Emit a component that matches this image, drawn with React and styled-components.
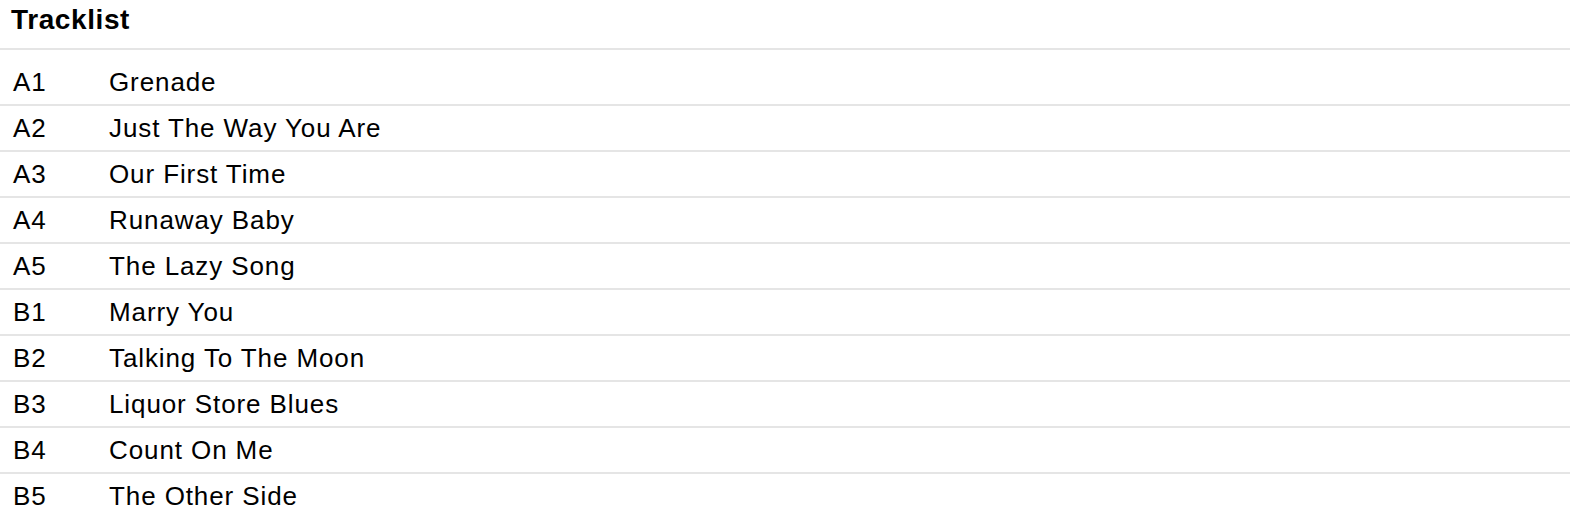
import React from "react";
import styled, { createGlobalStyle } from "styled-components";

const tracks = [
  { pos: "A1", title: "Grenade" },
  { pos: "A2", title: "Just The Way You Are" },
  { pos: "A3", title: "Our First Time" },
  { pos: "A4", title: "Runaway Baby" },
  { pos: "A5", title: "The Lazy Song" },
  { pos: "B1", title: "Marry You" },
  { pos: "B2", title: "Talking To The Moon" },
  { pos: "B3", title: "Liquor Store Blues" },
  { pos: "B4", title: "Count On Me" },
  { pos: "B5", title: "The Other Side" },
];

const GlobalStyle = createGlobalStyle`
  body {
    margin: 0;
    background: #fff;
    color: #000;
    font-family: "Liberation Sans", Arial, Helvetica, sans-serif;
  }
`;

const App = () => {
  return (
    <>
      <GlobalStyle />
      <Section>
        <Heading>Tracklist</Heading>
        <List>
          {tracks.map((t, i) => (
            <Row key={t.pos} last={i === tracks.length - 1}>
              <Position>{t.pos}</Position>
              <Title>{t.title}</Title>
            </Row>
          ))}
        </List>
      </Section>
    </>
  );
};

export default App;

const Section = styled.section`
  width: 100%;
`;

const Heading = styled.h2`
  margin: 0;
  padding: 0 0 9px 11px;
  font-size: 28px;
  font-weight: bold;
  letter-spacing: 0.6px;
  line-height: 39px;
  border-bottom: 2px solid #e5e5e5;
`;

const List = styled.ol`
  list-style: none;
  margin: 0;
  padding: 10px 0 0;
`;

const Row = styled.li`
  display: flex;
  align-items: center;
  height: 44px;
  padding-left: 13px;
  font-size: 26px;
  letter-spacing: 0.9px;
  line-height: 44px;
  border-bottom: ${(p) => (p.last ? "none" : "2px solid #e5e5e5")};
`;

const Position = styled.span`
  width: 96px;
  flex-shrink: 0;
`;

const Title = styled.span`
  white-space: nowrap;
`;
